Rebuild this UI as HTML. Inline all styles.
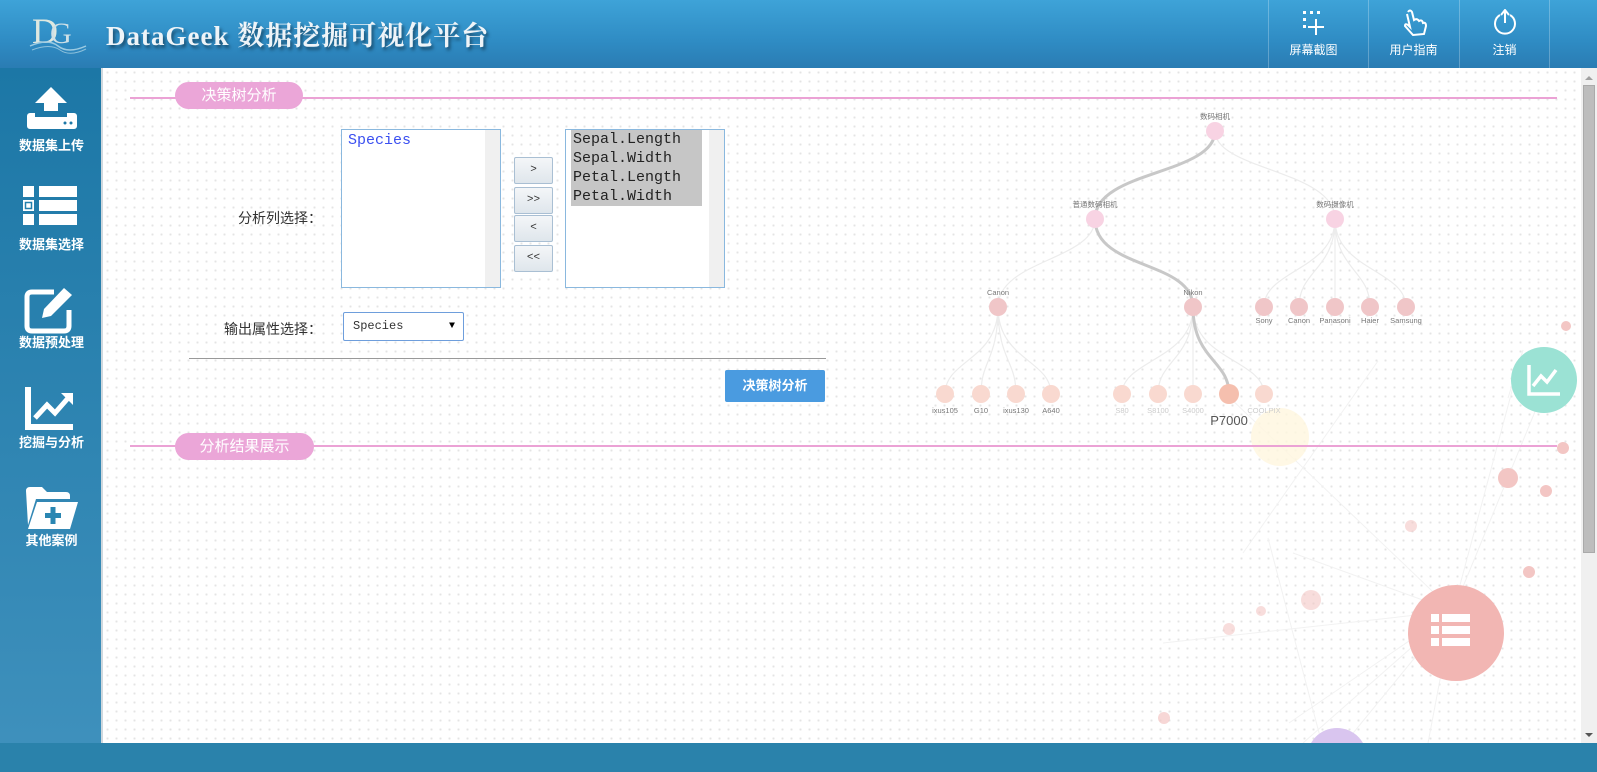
<!DOCTYPE html>
<html><head><meta charset="utf-8"><style>
*{margin:0;padding:0;box-sizing:border-box}
body{width:1597px;height:772px;overflow:hidden;position:relative;font-family:"Liberation Sans","Noto Sans CJK SC",sans-serif;background:#fff}
.abs{position:absolute}
#hdr{left:0;top:0;width:1597px;height:68px;background:linear-gradient(180deg,#3ea3d8 0%,#2f8cc4 60%,#2a7cb3 100%)}
#side{left:0;top:68px;width:103px;height:675px;background:linear-gradient(180deg,#1c77a6,#3e90bc);border-right:2px solid #cfd8de}
#main{left:103px;top:68px;width:1494px;height:675px;background-color:#fff;background-image:radial-gradient(#e4e4e4 1px,transparent 1.2px);background-size:9px 9px}
#bot{left:0;top:743px;width:1597px;height:29px;background:#2a82ab}
.si{position:absolute;left:0;width:103px;text-align:center;color:#fff;font-weight:bold;font-size:13px}
.hb{position:absolute;top:0;height:68px;width:90px;text-align:center;color:#fff;font-size:12px;border-left:1px solid rgba(255,255,255,.25)}
.pl{position:absolute;height:2px;background:#eba2d5}
.pill{position:absolute;background:#eba6d8;color:#fff;font-size:15px;border-radius:14px;text-align:center;line-height:27px}
.lb{position:absolute;background:#fff;border:1px solid #8ab8de}
.sb{position:absolute;right:0;top:0;width:16px;height:100%;background:#f0f0f0}
.btn{position:absolute;left:514px;width:39px;height:27px;background:linear-gradient(#f4f6f8,#dfe6ec);border:1px solid #a9bfd3;border-radius:2px;text-align:center;font-size:11px;line-height:25px;color:#333;font-family:"Liberation Mono",monospace}
.mono{font-family:"Liberation Mono","Noto Sans CJK SC",monospace;font-size:15px;line-height:19px}
</style></head><body>
<div id="hdr" class="abs">
 <div class="abs" style="left:32px;top:10px;font-family:'Liberation Serif',serif;font-size:36px;color:#dfe8e0;letter-spacing:-8px">D<span style="font-size:30px;color:#cfe0e6">G</span></div>
 <svg class="abs" style="left:28px;top:38px" width="60" height="16"><path d="M2 8 Q20 0 30 8 T58 8" stroke="#9ccbe2" fill="none" stroke-width="1.5"/><path d="M4 12 Q22 5 32 12 T58 11" stroke="#8cc0db" fill="none" stroke-width="1"/></svg>
 <div class="abs" style="left:106px;top:14px;font-family:'Liberation Serif','Noto Serif CJK SC',serif;font-weight:bold;font-size:27px;color:#eef4f8;letter-spacing:1px;text-shadow:2px 3px 3px #1a4f70">DataGeek 数据挖掘可视化平台</div>
 <div class="hb" style="left:1268px"><svg style="margin-top:10px" width="28" height="26"><g fill="#fff"><rect x="3" y="1" width="3" height="3"/><rect x="10" y="1" width="3" height="3"/><rect x="17" y="1" width="3" height="3"/><rect x="3" y="8" width="3" height="3"/><rect x="3" y="15" width="3" height="3"/><rect x="15" y="9" width="2" height="16"/><rect x="8" y="16" width="16" height="2"/></g></svg><div style="margin-top:2px">屏幕截图</div></div>
 <div class="hb" style="left:1368px"><svg style="margin-top:9px" width="28" height="27"><path d="M8 3 Q10 0 12 3 L14 11 Q17 9 19 12 Q22 10 23 14 Q26 13 26 17 L24 25 L13 26 L5 17 Q5 14 8 16 L10 18 L7 5" fill="none" stroke="#fff" stroke-width="2"/></svg><div style="margin-top:2px">用户指南</div></div>
 <div class="hb" style="left:1459px"><svg style="margin-top:9px" width="28" height="27"><path d="M9 6 A10 10 0 1 0 19 6" fill="none" stroke="#fff" stroke-width="2"/><path d="M14 14 V2 M10 6 L14 1 L18 6" fill="none" stroke="#fff" stroke-width="2"/></svg><div style="margin-top:2px">注销</div></div>
 <div class="hb" style="left:1549px;width:48px"></div>
</div>
<div id="side" class="abs">
 <svg class="abs" style="left:23px;top:18px" width="56" height="44"><path d="M28 1 L44 17 H35 V30 H21 V17 H12 Z" fill="#fff"/><rect x="4" y="27" width="50" height="16" rx="3" fill="#fff"/><rect x="12" y="25" width="32" height="6" fill="#1d78a7"/><circle cx="42" cy="37" r="1.5" fill="#1d78a7"/><circle cx="48" cy="37" r="1.5" fill="#1d78a7"/></svg>
 <div class="si" style="top:67px">数据集上传</div>
 <svg class="abs" style="left:23px;top:118px" width="56" height="42"><g fill="#fff"><rect x="0" y="0" width="11" height="11"/><rect x="0" y="14" width="11" height="11"/><rect x="0" y="28" width="11" height="11"/><rect x="16" y="0" width="38" height="11"/><rect x="16" y="14" width="38" height="11"/><rect x="16" y="28" width="38" height="11"/></g><rect x="2.5" y="16.5" width="6" height="6" fill="none" stroke="#2380ad" stroke-width="1.5"/></svg>
 <div class="si" style="top:166px">数据集选择</div>
 <svg class="abs" style="left:24px;top:218px" width="54" height="48"><path d="M30 6 H8 Q3 6 3 11 V40 Q3 45 8 45 H40 Q45 45 45 40 V24" fill="none" stroke="#fff" stroke-width="5"/><path d="M40 2 L48 9 L27 30 L18 32 L20 23 Z" fill="#fff"/></svg>
 <div class="si" style="top:264px">数据预处理</div>
 <svg class="abs" style="left:25px;top:317px" width="52" height="46"><path d="M3 2 V42 H48" fill="none" stroke="#fff" stroke-width="6"/><path d="M10 33 L22 20 L30 28 L44 12" fill="none" stroke="#fff" stroke-width="5"/><path d="M36 8 H48 V20 Z" fill="#fff"/></svg>
 <div class="si" style="top:364px">挖掘与分析</div>
 <svg class="abs" style="left:24px;top:417px" width="56" height="46"><path d="M2 6 Q2 2 6 2 H18 L23 7 H42 Q46 7 46 11 V14 H12 L4 40 Z" fill="#fff"/><path d="M13 17 H54 L46 44 H4 Z" fill="#fff"/><path d="M29 22 V39 M21 30.5 H37" stroke="#2a86b2" stroke-width="5"/></svg>
 <div class="si" style="top:462px">其他案例</div>
</div>
<div id="main" class="abs">
 <div class="sb" style="right:0"><div style="position:absolute;left:2px;top:17px;width:12px;height:468px;background:#bdbdbd;border:1px solid #aaa"></div><div style="position:absolute;top:4px;left:4px;width:0;height:0;border:4px solid transparent;border-bottom-color:#a0a0a0"></div><div style="position:absolute;bottom:2px;left:4px;width:0;height:0;border:4px solid transparent;border-top-color:#555"></div></div>
</div>
<svg class="abs" style="left:103px;top:68px" width="1478" height="675">
 <g fill="none" stroke="#f2f2f2" stroke-width="1">
  <path d="M1350 543 L1125 328 M1350 543 L1190 485 M1350 543 L1420 282 M1350 543 L1445 312 M1350 543 L1186 655 M1350 543 L1242 675 M1350 543 L1200 675 M1350 543 L1325 675 M1350 543 L1060 575 M1140 485 L1275 293 M1220 680 L1165 470 M1420 282 L1405 330"/>
 </g>
 <circle cx="1177" cy="369" r="29" fill="#fff6df" opacity=".8"/>
 <circle cx="1441" cy="312" r="33" fill="#9be2d4"/>
 <path d="M1426 297 V326 H1457 M1430 318 L1438 308 L1444 314 L1453 302" fill="none" stroke="#fff" stroke-width="3.5"/>
 <circle cx="1353" cy="565" r="48" fill="#f2b6b3"/>
 <g fill="#fff"><rect x="1328" y="546" width="8" height="8"/><rect x="1328" y="558" width="8" height="8"/><rect x="1328" y="570" width="8" height="8"/><rect x="1339" y="546" width="28" height="8"/><rect x="1339" y="558" width="28" height="8"/><rect x="1339" y="570" width="28" height="8"/></g>
 <circle cx="1234" cy="690" r="30" fill="#d9c5ef"/>
 <g fill="#f3c6c4"><circle cx="1463" cy="258" r="5"/><circle cx="1460" cy="380" r="6"/><circle cx="1405" cy="410" r="10"/><circle cx="1443" cy="423" r="6"/><circle cx="1426" cy="504" r="6"/><circle cx="1308" cy="458" r="6" opacity=".6"/><circle cx="1208" cy="532" r="10" opacity=".6"/><circle cx="1158" cy="543" r="5" opacity=".6"/><circle cx="1126" cy="561" r="6" opacity=".6"/><circle cx="1061" cy="650" r="6" opacity=".7"/></g>
</svg>
<div class="pl" style="left:130px;top:97px;width:1427px"></div>
<div class="pill" style="left:175px;top:82px;width:128px">决策树分析</div>
<div class="pl" style="left:130px;top:445px;width:1427px"></div>
<div class="pill" style="left:175px;top:433px;width:139px">分析结果展示</div>

<div class="abs" style="left:200px;top:208px;width:122px;text-align:right;font-size:14px;color:#333">分析列选择：</div>
<div class="lb" style="left:341px;top:129px;width:160px;height:159px"><div class="sb" style="width:15px"></div><div class="mono" style="position:absolute;left:6px;top:1px;color:#3a4ff0">Species</div></div>
<div class="btn" style="top:157px">&gt;</div>
<div class="btn" style="top:187px">&gt;&gt;</div>
<div class="btn" style="top:215px">&lt;</div>
<div class="btn" style="top:245px">&lt;&lt;</div>
<div class="lb" style="left:565px;top:129px;width:160px;height:159px"><div class="sb" style="width:15px"></div><div class="mono" style="position:absolute;left:5px;top:0;width:131px;background:#c6c6c6;color:#222;padding-left:2px">Sepal.Length<br>Sepal.Width<br>Petal.Length<br>Petal.Width</div></div>
<div class="abs" style="left:200px;top:319px;width:122px;text-align:right;font-size:14px;color:#333">输出属性选择：</div>
<div class="abs" style="left:343px;top:312px;width:121px;height:29px;border:1px solid #6e9edc;border-radius:2px;background:#fff;font-family:'Liberation Mono',monospace;font-size:12px;line-height:27px;padding-left:9px;color:#333">Species<span style="position:absolute;right:8px;font-size:10px;color:#000">▼</span></div>
<div class="abs" style="left:189px;top:358px;width:637px;height:1px;background:#999"></div>
<div class="abs" style="left:725px;top:370px;width:100px;height:32px;background:#4a9be0;border-radius:2px;color:#fff;font-weight:bold;font-size:13px;text-align:center;line-height:32px">决策树分析</div>

<svg class="abs" style="left:900px;top:100px" width="560" height="330" font-family="Liberation Sans,Noto Sans CJK SC,sans-serif">
 <g fill="none" stroke="#ececec" stroke-width="1.2">
  <path d="M315 31 C315 70 435 70 435 119"/>
  <path d="M195 119 C195 160 98 160 98 207"/>
  <path d="M435 119 C435 170 364 170 364 207 M435 119 C435 170 399 170 399 207 M435 119 V207 M435 119 C435 170 470 170 470 207 M435 119 C435 170 506 170 506 207"/>
  <path d="M98 207 C98 260 45 260 45 294 M98 207 C98 260 81 260 81 294 M98 207 C98 260 116 260 116 294 M98 207 C98 260 151 260 151 294"/>
  <path d="M293 207 C293 260 222 260 222 294 M293 207 C293 260 258 260 258 294 M293 207 V294 M293 207 C293 260 364 260 364 294"/>
 </g>
 <g fill="none" stroke="#c8c8c8" stroke-width="3">
  <path d="M315 31 C315 75 195 70 195 119"/>
  <path d="M195 119 C195 170 293 160 293 207"/>
  <path d="M293 207 C293 260 329 260 329 294"/>
 </g>
 <g fill="#f8d3e3"><circle cx="315" cy="31" r="9"/><circle cx="195" cy="119" r="9"/><circle cx="435" cy="119" r="9"/></g>
 <g fill="#f0c6c8"><circle cx="98" cy="207" r="9"/><circle cx="293" cy="207" r="9"/><circle cx="364" cy="207" r="9"/><circle cx="399" cy="207" r="9"/><circle cx="435" cy="207" r="9"/><circle cx="470" cy="207" r="9"/><circle cx="506" cy="207" r="9"/></g>
 <g fill="#f9d9d0"><circle cx="45" cy="294" r="9"/><circle cx="81" cy="294" r="9"/><circle cx="116" cy="294" r="9"/><circle cx="151" cy="294" r="9"/><circle cx="222" cy="294" r="9"/><circle cx="258" cy="294" r="9"/><circle cx="293" cy="294" r="9"/><circle cx="364" cy="294" r="9"/></g>
 <circle cx="329" cy="294" r="10" fill="#f5bfae"/>
 <g font-size="7.5" fill="#777" text-anchor="middle">
  <text x="315" y="19">数码相机</text><text x="195" y="107">普通数码相机</text><text x="435" y="107">数码摄像机</text>
  <text x="98" y="195">Canon</text><text x="293" y="195">Nikon</text>
  <text x="364" y="223">Sony</text><text x="399" y="223">Canon</text><text x="435" y="223">Panasoni</text><text x="470" y="223">Haier</text><text x="506" y="223">Samsung</text>
  <text x="45" y="313">ixus105</text><text x="81" y="313">G10</text><text x="116" y="313">ixus130</text><text x="151" y="313">A640</text>
  <g fill="#ccc"><text x="222" y="313">S80</text><text x="258" y="313">S8100</text><text x="293" y="313">S4000</text><text x="364" y="313">COOLPIX</text></g>
 </g>
 <text x="329" y="325" font-size="13" fill="#555" text-anchor="middle">P7000</text>
</svg>
<div id="bot" class="abs"></div>
</body></html>
